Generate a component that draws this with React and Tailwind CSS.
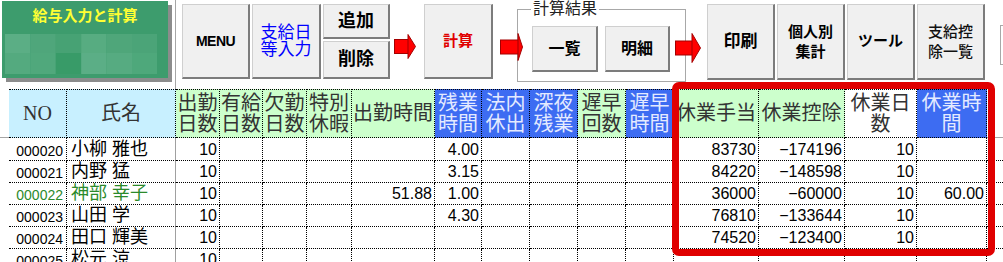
import React from "react";

const btn =
  "shrink-0 flex flex-col items-center justify-center text-center bg-[#f0f0f0] border-t border-l border-t-[#cfcfcf] border-l-[#cfcfcf] border-r-2 border-b-2 border-r-[#7c7c7c] border-b-[#7c7c7c]";

function Arrow({ w, bw, h, className }) {
  const by = (h - 15) / 2;
  return (
    <svg width={w} height={h} viewBox={`0 0 ${w} ${h}`} className={`shrink-0 relative z-10 ${className}`}>
      <rect x="0.5" y={by + 0.5} width={bw} height="14" fill="#ff0000" stroke="#a30000" />
      <polygon points={`${bw},0.5 ${w - 0.5},${h / 2} ${bw},${h - 0.5}`} fill="#ff0000" stroke="#a30000" />
    </svg>
  );
}

const mosaic = [
  ["#5bae85", "#4fa67b", "#47a274", "#57ac81", "#4fa67a", "#4ba478"],
  ["#54aa7f", "#50a87c", "#389b68", "#5bae86", "#56ab81", "#4ea87b"],
];

function TitleBox() {
  return (
    <div className="shrink-0 ml-[2px] mt-[1px] w-[166px] h-[77px] bg-[#3d9c6d] shadow-[4px_4px_0_#8c8c8c] flex flex-col">
      <div className="text-center text-[15px] leading-[17px] pt-[6px] font-bold text-[#ffff33]">給与入力と計算</div>
      <svg width="152" height="40" className="ml-[3px] mt-[10px]">
        {mosaic.map((row, r) =>
          row.map((c, i) => <rect key={`${r}-${i}`} x={i * 25.4} y={r * 19} width="25.4" height={r ? 21 : 19} fill={c} />)
        )}
      </svg>
    </div>
  );
}

function Toolbar() {
  return (
    <div className="flex items-start h-[89px]">
      <TitleBox />
      <div className="shrink-0 ml-[7px] w-px h-[89px] bg-[#a6a6a6]" />
      <div className={`${btn} ml-[6px] mt-[4px] w-[68px] h-[75px] text-[14px] font-bold tracking-[-0.5px]`}>MENU</div>
      <div className={`${btn} ml-[2px] mt-[4px] w-[69px] h-[75px] text-[17px] leading-[17px] text-[#0000ff]`}>
        <span>支給日</span>
        <span>等入力</span>
      </div>
      <div className="shrink-0 ml-[2px] mt-[4px] w-[67px] flex flex-col">
        <div className={`${btn} h-[35px] text-[18px] font-bold`}>追加</div>
        <div className={`${btn} mt-[2px] h-[38px] text-[18px] font-bold`}>削除</div>
      </div>
      <Arrow w={22} bw={14} h={25} className="ml-[4px] mt-[34px]" />
      <div className={`${btn} ml-[8px] mt-[4px] w-[69px] h-[75px] text-[15px] font-bold text-[#e00000]`}>計算</div>
      <Arrow w={23} bw={18} h={28} className="ml-[7px] mt-[33px]" />
      <div className="shrink-0 relative ml-[-6px] mt-[9px] w-[169px] h-[73px] border border-[#a8a8a8]">
        <span className="absolute left-[13px] top-[-10px] bg-white px-[2px] text-[16px] leading-[18px] text-[#222]">計算結果</span>
        <div className="flex pl-[14px] pt-[16px] gap-[7px]">
          <div className={`${btn} w-[66px] h-[46px] text-[16px] font-bold`}>一覧</div>
          <div className={`${btn} w-[65px] h-[46px] text-[16px] font-bold`}>明細</div>
        </div>
      </div>
      <Arrow w={26} bw={17} h={30} className="ml-[-11px] mt-[33px]" />
      <div className={`${btn} ml-[6px] mt-[4px] w-[68px] h-[76px] text-[17px] font-bold`}>印刷</div>
      <div className={`${btn} ml-[2px] mt-[4px] w-[68px] h-[76px] text-[15px] leading-[20px] font-bold`}>
        <span>個人別</span>
        <span>集計</span>
      </div>
      <div className={`${btn} ml-[2px] mt-[4px] w-[68px] h-[76px] text-[15px] font-bold`}>ツール</div>
      <div className={`${btn} ml-[2px] mt-[4px] w-[68px] h-[76px] text-[15px] leading-[20px] font-medium text-[#111]`}>
        <span>支給控</span>
        <span>除一覧</span>
      </div>
      <div className="shrink-0 ml-[15px] mt-[25px] w-[10px] h-[40px] border border-[#a8a8a8] bg-white" />
    </div>
  );
}

const cols =
  "grid grid-cols-[9px_58px_109px_44px_43px_44px_45px_83px_47px_48px_48px_48px_48px_85px_86px_72px_70px_1fr]";

const green = "bg-[#ccffcc] text-[#333]";
const cyan = "bg-[#c8f0ff] text-[#333]";
const blue = "bg-[#3d6cf2] text-[#e4eaff]";
const white = "bg-white text-[#333]";

const headers = [
  { t: ["NO"], c: cyan, serif: true },
  { t: ["氏名"], c: cyan },
  { t: ["出勤", "日数"], c: green },
  { t: ["有給", "日数"], c: green },
  { t: ["欠勤", "日数"], c: green },
  { t: ["特別", "休暇"], c: green },
  { t: ["出勤時間"], c: green },
  { t: ["残業", "時間"], c: blue },
  { t: ["法内", "休出"], c: blue },
  { t: ["深夜", "残業"], c: blue },
  { t: ["遅早", "回数"], c: green },
  { t: ["遅早", "時間"], c: blue },
  { t: ["休業手当"], c: green },
  { t: ["休業控除"], c: green },
  { t: ["休業日", "数"], c: white },
  { t: ["休業時", "間"], c: blue },
];

const rows = [
  { no: "000020", name: "小柳 雅也", v: ["10", "", "", "", "", "4.00", "", "", "", "", "83730", "−174196", "10", ""] },
  { no: "000021", name: "内野 猛", v: ["10", "", "", "", "", "3.15", "", "", "", "", "84220", "−148598", "10", ""] },
  { no: "000022", name: "神部 幸子", green: true, v: ["10", "", "", "", "51.88", "1.00", "", "", "", "", "36000", "−60000", "10", "60.00"] },
  { no: "000023", name: "山田 学", v: ["10", "", "", "", "", "4.30", "", "", "", "", "76810", "−133644", "10", ""] },
  { no: "000024", name: "田口 輝美", v: ["10", "", "", "", "", "", "", "", "", "", "74520", "−123400", "10", ""] },
  { no: "000025", name: "松元 涼", v: ["10", "", "", "", "", "", "", "", "", "", "", "", "", ""] },
];

const cell = "border-r border-b border-dotted border-black";

function HeaderRow() {
  return (
    <div className={`${cols} h-[49px]`}>
      <div className="border-b border-[#a6a6a6]" />
      {headers.map((h, i) => (
        <div
          key={i}
          className={`${cell} border-t ${h.c} flex flex-col items-center justify-center text-[20px] leading-[21px] ${h.serif ? "font-['Liberation_Serif',serif]" : ""}`}
        >
          {h.t.map((s, j) => (
            <span key={j}>{s}</span>
          ))}
        </div>
      ))}
      <div className="border-b border-[#a6a6a6]" />
    </div>
  );
}

function DataRow({ r, first }) {
  // only the number and the name are coloured on a highlighted row
  const tc = r.green ? "text-[#2b8a2b]" : "text-black";
  return (
    <div className={`${cols} ${first ? "h-[23px]" : "h-[22px]"} text-black`}>
      <div />
      <div className={`${cell} ${tc} flex items-end justify-end pr-[3px] text-[14px] leading-[18px]`}>{r.no}</div>
      <div className={`${cell} ${tc} [border-right-style:solid] border-r-[#a0a0a0] flex items-end pl-[4px] text-[18px] leading-[21px]`}>
        {r.name}
      </div>
      {r.v.map((x, i) => (
        <div key={i} className={`${cell} flex items-end justify-end pr-[2px] text-[16px] leading-[20px]`}>
          {x}
        </div>
      ))}
      <div className="border-b border-dotted border-black" />
    </div>
  );
}

export default function App() {
  return (
    <div className="relative w-[1003px] h-[262px] overflow-hidden bg-white font-['Liberation_Sans','Noto_Sans_CJK_JP',sans-serif]">
      <Toolbar />
      <div>
        <HeaderRow />
        {rows.map((r, i) => (
          <DataRow key={r.no} r={r} first={i === 0} />
        ))}
      </div>
      {/* highlight frame drawn over the 休業 columns */}
      <div className="absolute left-[672px] top-[82px] w-[323px] h-[174px] border-[7px] border-[#e00000] rounded-[7px] pointer-events-none" />
    </div>
  );
}
